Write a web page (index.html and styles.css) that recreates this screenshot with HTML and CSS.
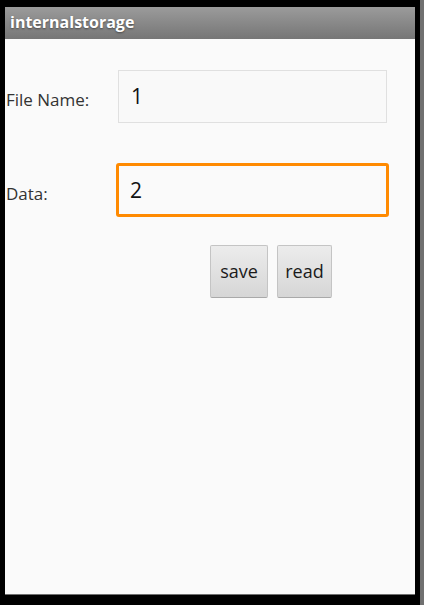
FILE: index.html
```html
<!DOCTYPE html>
<html>
<head>
<meta charset="utf-8">
<link rel="stylesheet" href="styles.css">
</head>
<body>
<div class="device">
  <div class="column">
    <div class="screen">
      <div class="titlebar">internalstorage</div>
      <div class="content">
        <div class="row row-name">
          <div class="label">File Name:</div>
          <div class="field">1</div>
        </div>
        <div class="row row-data">
          <div class="label">Data:</div>
          <div class="field focused">2</div>
        </div>
        <div class="buttons">
          <div class="btn btn-save">save</div>
          <div class="btn btn-read">read</div>
        </div>
      </div>
    </div>
    <div class="bottomline"></div>
  </div>
  <div class="stripe"></div>
</div>
</body>
</html>
```

FILE: styles.css
```css
html, body {
  margin: 0;
  padding: 0;
  background: #000;
}
.device {
  width: 424px;
  height: 605px;
  display: flex;
  background: #000;
  overflow: hidden;
}
.column {
  margin-left: 5px;
  padding-top: 7px;
  width: 410px;
  display: flex;
  flex-direction: column;
}
.screen {
  height: 587px;
  background: #fafafa;
  display: flex;
  flex-direction: column;
}
.bottomline {
  height: 1px;
  background: #6f6f6f;
}
.stripe {
  margin-left: 5px;
  width: 4px;
  background: #707070;
}
.titlebar {
  height: 32px;
  box-sizing: border-box;
  padding-left: 5px;
  padding-top: 4px;
  background: linear-gradient(#9b9b9b, #767676);
  color: #fff;
  font-family: "Open Sans", Roboto, "Liberation Sans", sans-serif;
  font-weight: bold;
  font-size: 16px;
  line-height: 22px;
  text-shadow: 0 1px 2px rgba(0,0,0,0.45);
}
.content {
  display: flex;
  flex-direction: column;
  font-family: "Open Sans", Roboto, "Liberation Sans", sans-serif;
}
.row {
  display: flex;
  align-items: center;
}
.row-name {
  margin-top: 31px;
}
.row-data {
  margin-top: 40px;
}
.label {
  width: 113px;
  padding-left: 1px;
  box-sizing: border-box;
  margin-top: 6px;
  font-size: 17px;
  color: #333;
}
.field {
  width: 269px;
  height: 53px;
  box-sizing: border-box;
  border: 1px solid #e0e0e0;
  background: #f9f9f9;
  padding-left: 12px;
  font-size: 21px;
  line-height: 51px;
  color: #111;
}
.field.focused {
  margin-left: -2px;
  width: 273px;
  height: 54px;
  border: 3px solid #ff8a00;
  border-radius: 3px;
  padding-left: 11px;
  line-height: 48px;
  background: #fafafa;
}
.buttons {
  margin-top: 28px;
  margin-left: 205px;
  display: flex;
  gap: 9px;
}
.btn {
  height: 53px;
  box-sizing: border-box;
  border: 1px solid #c4c4c4;
  border-bottom-color: #a9a9a9;
  border-radius: 2px;
  background: linear-gradient(#ececec, #d6d6d6);
  font-size: 18px;
  line-height: 51px;
  text-align: center;
  color: #1a1a1a;
}
.btn-save { width: 58px; }
.btn-read { width: 55px; }
```
